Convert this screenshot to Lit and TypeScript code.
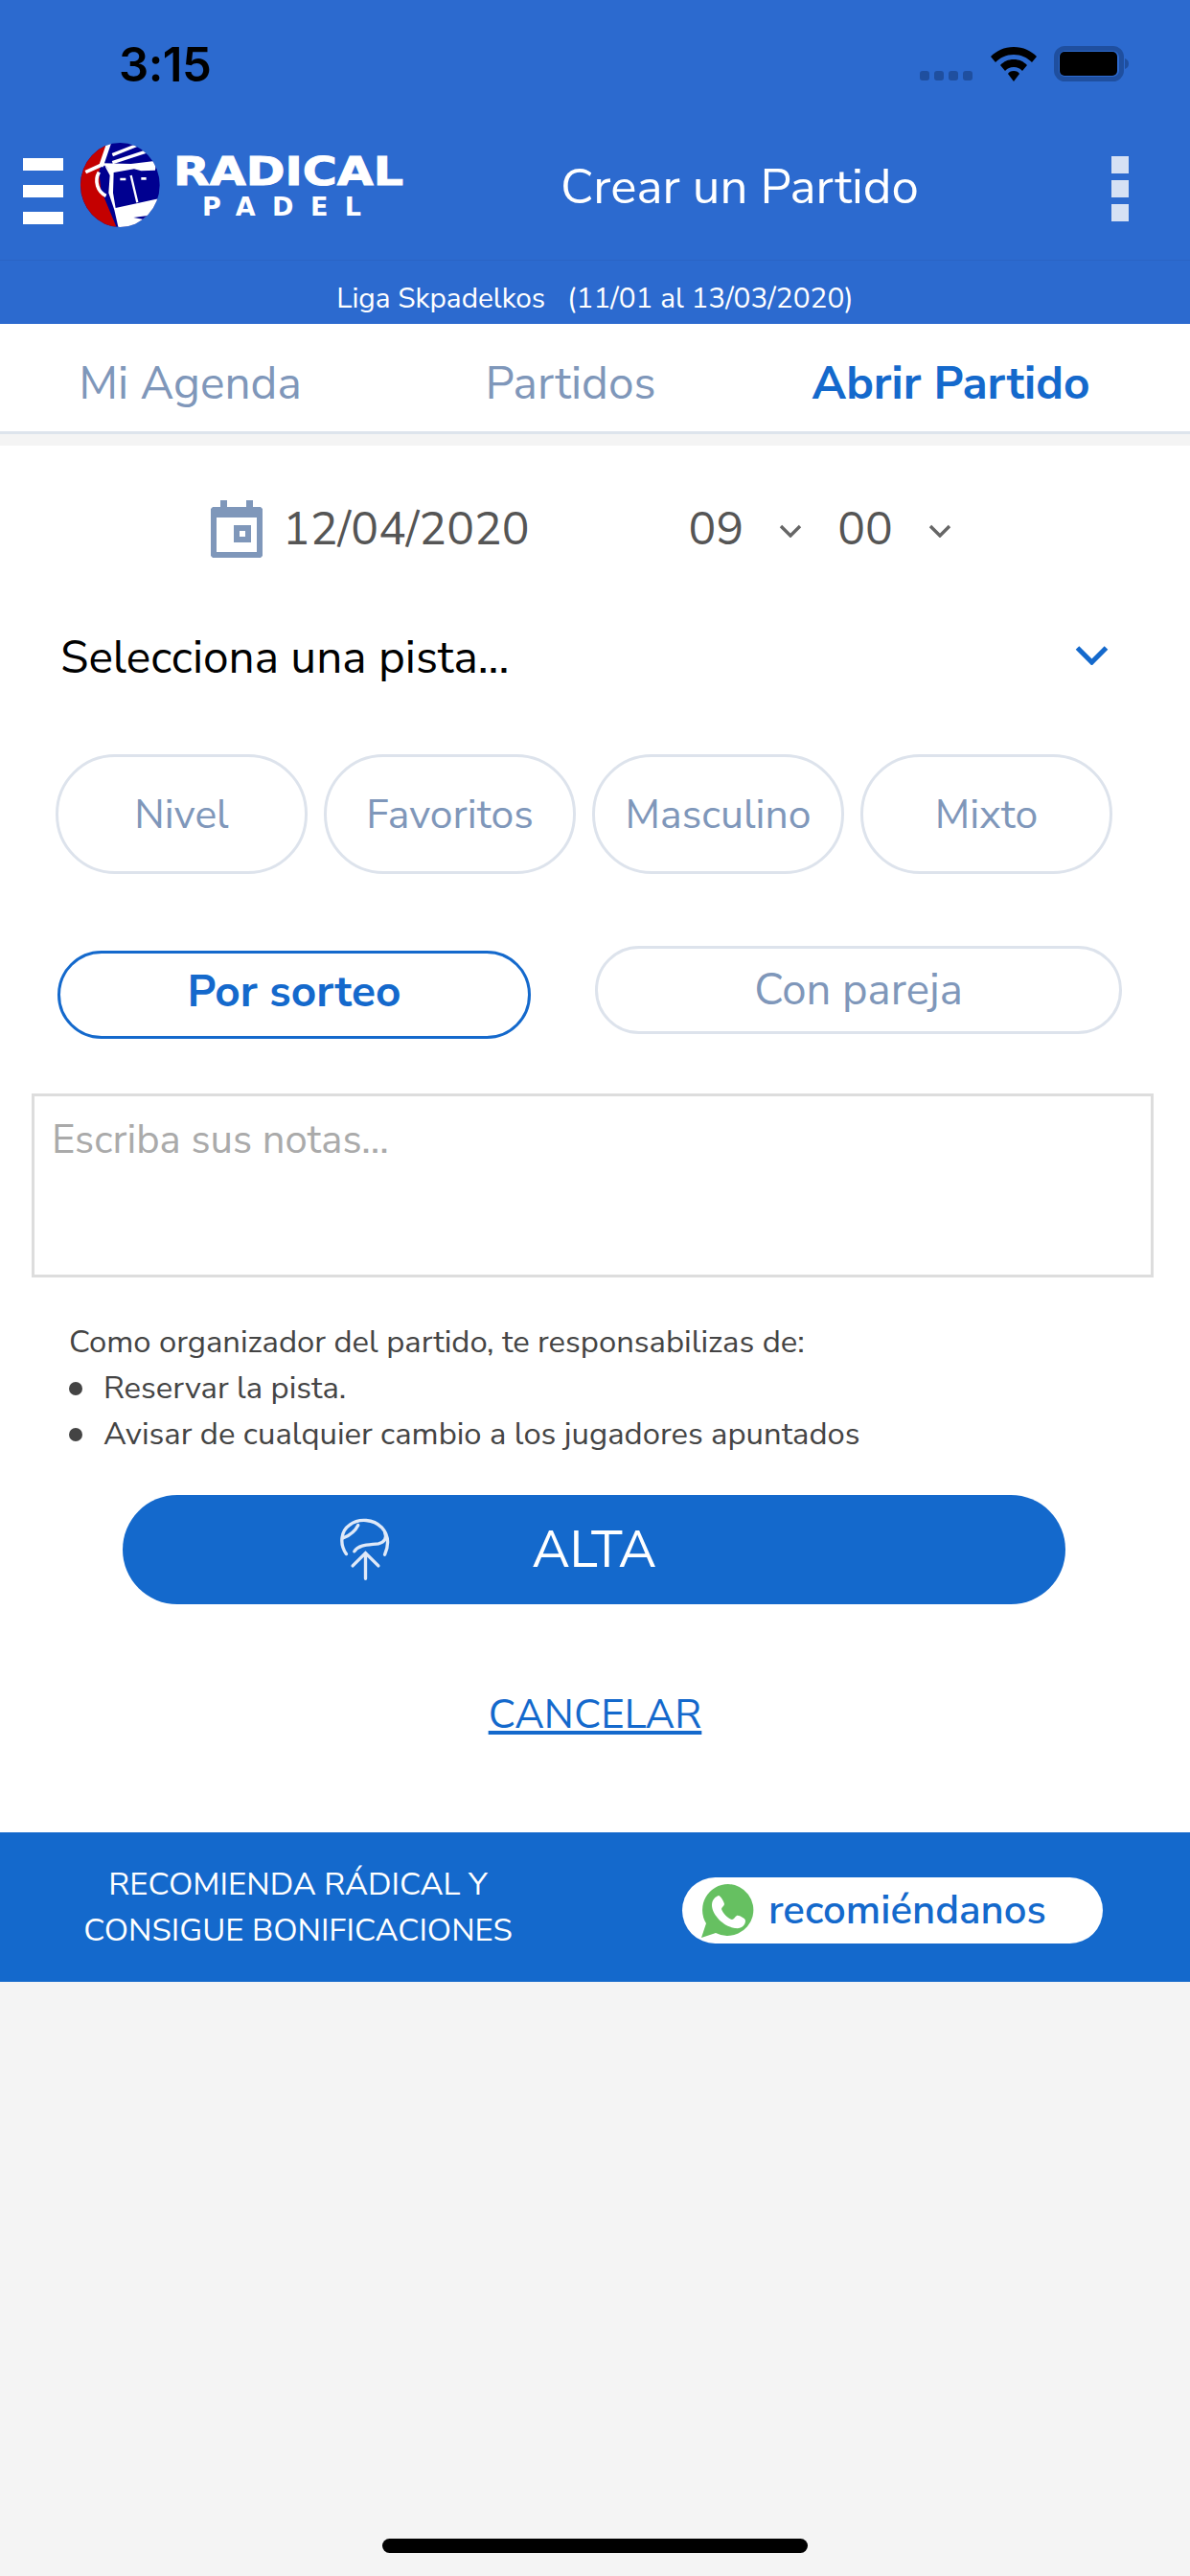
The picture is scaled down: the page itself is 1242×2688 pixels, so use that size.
import { LitElement, html, css } from "lit";
import { customElement } from "lit/decorators.js";

const chevron = (cls: string) => html`<svg class=${cls} viewBox="0 0 24 14"><path d="M2 2 L12 12 L22 2" fill="none" stroke="currentColor" stroke-width="3.4"/></svg>`;

@customElement("app-root")
export class AppRoot extends LitElement {
  static styles = css`
    :host { display: flex; flex-direction: column; width: 1242px; height: 2688px; background: #f4f4f4; font-family: "Nunito Sans", Lato, "Noto Sans", sans-serif; position: relative; overflow: hidden; }
    .header { height: 338px; background: #2c6acf; display: flex; flex-direction: column; color: #fff; flex: none; }
    .status { height: 136px; display: flex; align-items: flex-start; padding: 48px 62px 0 124px; box-sizing: border-box; }
    .time { font: 600 49px/40px Inter, "Liberation Sans", sans-serif; color: #000; letter-spacing: -0.5px; }
    .status-right { margin-left: auto; display: flex; align-items: flex-end; }
    .dots { display: flex; gap: 5px; margin-right: 19px; margin-bottom: 1px; }
    .dots i { width: 10px; height: 10px; border-radius: 3px; background: #1f4f9f; }
    .wifi { width: 48px; height: 36px; margin-right: 18px; }
    .batt { width: 80px; height: 37px; }
    .nav { height: 136px; display: flex; align-items: flex-start; position: relative; border-bottom: 1px solid #2b64c4; box-sizing: border-box; }
    .burger { margin: 29px 0 0 24px; width: 42px; display: flex; flex-direction: column; gap: 15px; }
    .burger i { display: block; height: 13px; background: #fff; }
    .logo { width: 340px; height: 90px; margin: 13px 0 0 18px; flex: none; }
    .title { position: absolute; left: 585px; top: 29px; font-size: 51px; line-height: 60px; white-space: nowrap; }
    .kebab { position: absolute; left: 1160px; top: 27px; display: flex; flex-direction: column; gap: 7px; }
    .kebab i { display: block; width: 18px; height: 18px; background: #d6e1f4; }
    .league { height: 66px; display: flex; align-items: center; justify-content: center; font-size: 29.800px; white-space: pre; color: #fff; padding-top: 12px; box-sizing: border-box; }
    .tabs { height: 112px; background: #fff; display: grid; grid-template-columns: repeat(3, 397px); border-bottom: 3px solid #dde4ec; flex: none; box-sizing: content-box; }
    .tab { display: flex; align-items: center; justify-content: center; font-size: 47.800px; color: #7f97ba; padding-top: 12px; box-sizing: border-box; }
    .tab.on { color: #1469cc; font-weight: 700; }
    .band { height: 12px; background: #f4f4f4; flex: none; }
    .main { background: #fff; flex: none; height: 1447px; display: flex; flex-direction: column; }
    .when { display: flex; align-items: center; height: 60px; margin-top: 57px; padding-left: 220px; font-size: 48px; color: #555; }
    .cal { width: 54px; height: 60px; margin-right: 21px; }
    .h1 { margin-left: 166px; }
    .sm { width: 24px; height: 14px; color: #666; margin: 4px 37px 0 37px; }
    .pista { display: flex; align-items: center; justify-content: space-between; margin-top: 74px; padding: 0 84px 0 63px; height: 60px; font-size: 47.800px; color: #000; }
    .pista svg { width: 37px; height: 21px; color: #1469cc; margin-bottom: 5px; }
    .chips { display: grid; grid-template-columns: repeat(4, 263px); gap: 17px; margin: 71px 0 0 58px; }
    .chip { height: 125px; border: 3px solid #dde3ec; border-radius: 62px; box-sizing: border-box; display: flex; align-items: center; justify-content: center; font-size: 42.700px; color: #7f97ba; background: #fff; }
    .mode { display: flex; margin-top: 75px; align-items: flex-start; padding-left: 60px; }
    .pill { display: flex; align-items: center; justify-content: center; box-sizing: border-box; border-radius: 50px; }
    .pill.on { width: 494px; height: 92px; border: 3px solid #1469cc; color: #1469cc; font-size: 46px; font-weight: 700; margin-top: 5px; padding-bottom: 8px; }
    .pill.off { width: 550px; height: 92px; border: 3px solid #dde3ec; color: #7f97ba; font-size: 45.500px; margin-left: 67px; }
    .notes { margin: 57px 38px 0 33px; height: 192px; border: 3px solid #ddd; box-sizing: border-box; padding: 21px 18px; font-size: 41.800px; line-height: 50px; color: #aaa; }
    .info { margin: 44px 0 0 72px; font-size: 32.800px; line-height: 48px; color: #444; }
    .info ul { list-style: none; margin: 0; padding: 0; }
    .info li { display: flex; align-items: center; gap: 22px; }
    .info li::before { content: ""; width: 14px; height: 14px; border-radius: 50%; background: #444; }
    .alta { margin: 39px 0 0 128px; width: 984px; height: 114px; border-radius: 57px; background: #1469cc; color: #fff; font-size: 54px; position: relative; display: flex; align-items: center; justify-content: center; }
    .alta svg { position: absolute; left: 225px; top: 22px; width: 57px; height: 67px; }
    .cancel { margin-top: 90px; text-align: center; font-size: 42px; line-height: 52px; color: #1469cc; text-decoration: underline; }
    .foot { height: 156px; background: #1469cc; flex: none; display: flex; align-items: center; }
    .foot-t { width: 622px; text-align: center; font-size: 33px; line-height: 48px; color: #fff; padding-top: 2px; }
    .wa { margin: 7px 0 0 90px; width: 439px; height: 69px; border-radius: 35px; background: #fff; display: flex; align-items: center; font-size: 42px; font-weight: 600; color: #1469cc; }
    .wa svg { width: 58px; height: 58px; margin: 0 14px 0 18px; }
    .home { position: absolute; left: 399px; top: 2649px; width: 444px; height: 15px; border-radius: 8px; background: #000; }
  `;

  render() {
    return html`
      <section class="header">
        <div class="status">
          <span class="time">3:15</span>
          <div class="status-right">
            <div class="dots"><i></i><i></i><i></i><i></i></div>
            <svg class="wifi" viewBox="0 0 48 36"><path d="M24 0C14 0 6 4 0 10l5 6c5-5 11-8 19-8s14 3 19 8l5-6C42 4 34 0 24 0z"/><path d="M24 13c-6 0-10 2-14 6l5 6c3-3 5-4 9-4s6 1 9 4l5-6c-4-4-8-6-14-6z"/><path d="M24 25c-3 0-5 1-6 3l6 8 6-8c-1-2-3-3-6-3z"/></svg>
            <svg class="batt" viewBox="0 0 80 37"><rect x="2.500" y="2.500" width="68" height="32" rx="9" fill="none" stroke="#1f4f9f" stroke-width="5"/><rect x="6" y="6" width="60" height="25" rx="5"/><path d="M74 13c3 1 4 3 4 5.500s-1 4.500-4 5.500z" fill="#1f4f9f"/></svg>
          </div>
        </div>
        <div class="nav">
          <div class="burger"><i></i><i></i><i></i></div>
          <svg class="logo" viewBox="0 0 340 90">
            <defs><clipPath id="c"><ellipse cx="196" cy="190" rx="124" ry="132"/></clipPath></defs>
            <g transform="scale(0.3333) translate(-72,-58)">
              <g clip-path="url(#c)">
                <rect x="60" y="50" width="280" height="280" fill="#000090"/>
                <path d="M60 50H156L130 150L136 205L188 330H60z" fill="#c40000"/>
                <path d="M162 56L136 132" fill="none" stroke="#fff" stroke-width="14"/>
                <path d="M88 150L145 124" fill="none" stroke="#fff" stroke-width="11"/>
                <path d="M172 96L252 64M172 120L282 84" fill="none" stroke="#fff" stroke-width="10"/>
                <path d="M140 122L230 124L310 114L306 144L262 146L240 140L172 152z" fill="#fff"/>
                <path d="M130 150C114 178 126 212 152 224" fill="none" stroke="#fff" stroke-width="11"/>
                <path d="M148 130L164 160L160 215L178 268L192 330H262V302L300 285L320 232L182 262L174 215L176 152z" fill="#fff"/>
                <path d="M230 160L250 245" fill="none" stroke="#fff" stroke-width="7"/>
                <path d="M196 172H214M262 170H278" stroke="#fff" stroke-width="8"/>
                <path d="M238 292L310 282L290 302z" fill="#000090"/>
              </g>
            </g>
            <text x="97" y="44" font-family="DejaVu Sans" font-weight="700" font-size="41" fill="#fff" stroke="#fff" stroke-width="1" textLength="240" lengthAdjust="spacingAndGlyphs">RADICAL</text>
            <text x="127" y="76" font-family="DejaVu Sans" font-weight="700" font-size="27" fill="#fff" textLength="166" lengthAdjust="spacing">PADEL</text>
          </svg>
          <div class="title">Crear un Partido</div>
          <div class="kebab"><i></i><i></i><i></i></div>
        </div>
        <div class="league">Liga Skpadelkos   (11/01 al 13/03/2020)</div>
      </section>
      <nav class="tabs">
        <div class="tab">Mi Agenda</div>
        <div class="tab">Partidos</div>
        <div class="tab on">Abrir Partido</div>
      </nav>
      <div class="band"></div>
      <main class="main">
        <div class="when">
          <svg class="cal" viewBox="0 0 54 60"><path fill="#7f97ba" d="M10 0h7v7h20V0h7v7h8l2 2v49l-2 2H2l-2-2V9l2-2h8z"/><rect x="6" y="18" width="42" height="36" fill="#fff"/><rect x="24" y="26" width="18" height="18" fill="#7f97ba"/><rect x="30" y="32" width="6" height="6" fill="#fff"/></svg>
          <span>12/04/2020</span>
          <span class="h1">09</span>${chevron("sm")}<span>00</span>${chevron("sm")}
        </div>
        <div class="pista"><span>Selecciona una pista...</span>${chevron("")}</div>
        <div class="chips"><div class="chip">Nivel</div><div class="chip">Favoritos</div><div class="chip">Masculino</div><div class="chip">Mixto</div></div>
        <div class="mode"><div class="pill on">Por sorteo</div><div class="pill off">Con pareja</div></div>
        <div class="notes">Escriba sus notas...</div>
        <div class="info">
          <div>Como organizador del partido, te responsabilizas de:</div>
          <ul><li>Reservar la pista.</li><li>Avisar de cualquier cambio a los jugadores apuntados</li></ul>
        </div>
        <div class="alta">
          <svg viewBox="70 40 170 200" fill="none" stroke="#dfe9f8" stroke-width="10" stroke-linecap="round"><path d="M95 158C72 125 80 85 105 68C135 45 180 50 205 75C228 100 228 130 215 160"/><path d="M86 108C105 100 122 88 132 68"/><path d="M120 150C135 128 165 130 195 126C215 122 222 108 215 90"/><path d="M155 235V155M115 195L155 155L195 195"/></svg>
          ALTA
        </div>
        <div class="cancel">CANCELAR</div>
      </main>
      <footer class="foot">
        <div class="foot-t">RECOMIENDA RÁDICAL Y<br />CONSIGUE BONIFICACIONES</div>
        <div class="wa">
          <svg viewBox="0 0 58 58"><path fill="#66c061" d="M30 1a27 27 0 0 0-23 41L2 57l15-5A27 27 0 1 0 30 1z"/><path fill="#fff" d="M20 13c-3 1-7 4-7 10 0 9 11 22 24 24 7 1 11-3 11-8 0-2-7-6-9-5-2 1-3 4-5 4-4-1-10-7-11-11 0-2 3-3 3-5 0-2-4-9-6-9z"/></svg>
          recomiéndanos
        </div>
      </footer>
      <div class="home"></div>
    `;
  }
}
